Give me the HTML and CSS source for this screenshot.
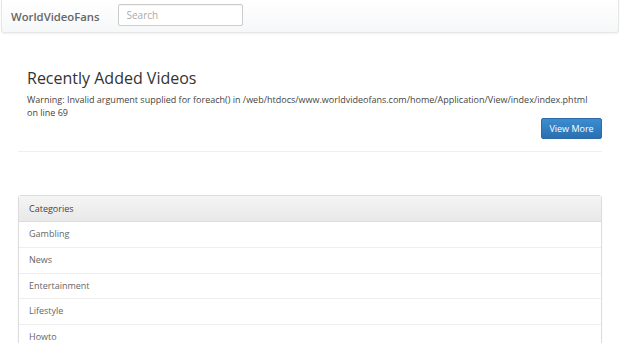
FILE: index.html
```html
<!DOCTYPE html>
<html>
<head>
<meta charset="utf-8">
<link rel="stylesheet" href="styles.css">
</head>
<body>
<nav class="navbar">
  <span class="brand">WorldVideoFans</span>
  <input class="search" type="text" placeholder="Search">
</nav>
<main class="container">
  <section class="intro">
    <h1 class="title">Recently Added Videos</h1>
    <p class="warning">Warning: Invalid argument supplied for foreach() in /web/htdocs/www.worldvideofans.com/home/Application/View/index/index.phtml on line 69</p>
    <div class="actions"><a class="btn">View More</a></div>
  </section>
  <section class="panel">
    <div class="panel-heading">Categories</div>
    <ul class="list">
      <li>Gambling</li>
      <li>News</li>
      <li>Entertainment</li>
      <li>Lifestyle</li>
      <li>Howto</li>
    </ul>
  </section>
</main>
</body>
</html>
```
FILE: styles.css
```css
* { box-sizing: border-box; }
html, body { margin: 0; padding: 0; background: #fff; }
body {
  font-family: "Open Sans", "Liberation Sans", sans-serif;
  color: #333;
  overflow: hidden;
  height: 343px;
}
.navbar {
  margin: 0 1px;
  height: 33px;
  display: flex;
  align-items: center;
  padding: 0 9px;
  gap: 18px;
  background: linear-gradient(#ffffff, #f6f7f8);
  border: 1px solid #e6e6e6;
  border-top: 0;
  border-radius: 0 0 3px 3px;
  box-shadow: 0 1px 2px rgba(0,0,0,0.06);
}
.brand {
  font-size: 11.3px;
  font-weight: 600;
  color: #666;
}
.search {
  width: 125px;
  height: 22px;
  margin-top: -2px;
  border: 1px solid #ccc;
  border-radius: 2px;
  padding: 0 8px;
  font-family: inherit;
  font-size: 10px;
  color: #555;
  box-shadow: inset 0 1px 1px rgba(0,0,0,0.05);
}
.search::placeholder { color: #aaa; }
.container {
  padding: 0 18px;
}
.intro {
  margin-top: 34px;
  padding: 0 0 12px 9px;
  border-bottom: 1px solid #eee;
}
.title {
  margin: 0;
  font-size: 16px;
  font-weight: 400;
  color: #333;
  line-height: 22px;
}
.warning {
  margin: 4px 0 0;
  padding-right: 9px;
  font-size: 9px;
  line-height: 13px;
  color: #444;
}
.actions {
  display: flex;
  justify-content: flex-end;
  margin-top: -1px;
}
.btn {
  display: inline-block;
  width: 61px;
  height: 21px;
  line-height: 20px;
  text-align: center;
  font-size: 9px;
  color: #fff;
  background: linear-gradient(#3c8dd0, #2a6fb0);
  border: 1px solid #2c6aa8;
  border-radius: 2px;
}
.panel {
  margin-top: 43px;
  border: 1px solid #ddd;
  border-radius: 3px;
  box-shadow: 0 1px 2px rgba(0,0,0,0.05);
}
.panel-heading {
  height: 26px;
  line-height: 25px;
  padding: 0 10px;
  font-size: 9px;
  color: #444;
  background: linear-gradient(#f5f5f5, #e8e8e8);
  border-bottom: 1px solid #ddd;
}
.list { list-style: none; margin: 0; padding: 0; }
.list li {
  height: 25.4px;
  line-height: 24px;
  padding: 0 10px;
  font-size: 9px;
  color: #666;
  border-top: 1px solid #eee;
}
.list li:first-child { border-top: 0; }
```
